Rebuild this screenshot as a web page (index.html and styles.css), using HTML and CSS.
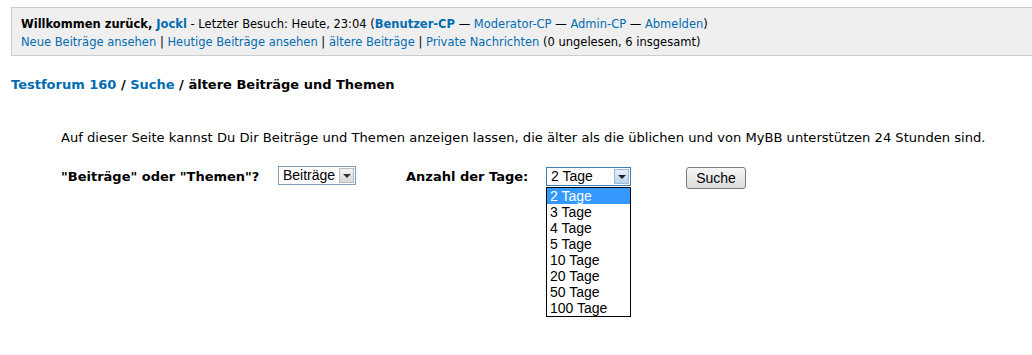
FILE: index.html
```html
<!DOCTYPE html>
<html lang="de">
<head>
    <meta charset="UTF-8">
    <title>ältere Beiträge und Themen</title>
    <link rel="stylesheet" href="styles.css">
</head>
<body>
    <div class="panel">
        <div><strong>Willkommen zurück, <a href="#">Jockl</a></strong> - Letzter Besuch: Heute, 23:04 (<a href="#"><strong>Benutzer-CP</strong></a> &mdash; <a href="#">Moderator-CP</a> &mdash; <a href="#">Admin-CP</a> &mdash; <a href="#">Abmelden</a>)</div>
        <div><a href="#">Neue Beiträge ansehen</a> | <a href="#">Heutige Beiträge ansehen</a> | <a href="#">ältere Beiträge</a> | <a href="#">Private Nachrichten</a> (0 ungelesen, 6 insgesamt)</div>
    </div>

    <div class="navigation">
        <a href="#">Testforum 160</a> / <a href="#">Suche</a> / <span>ältere Beiträge und Themen</span>
    </div>

    <div class="content">
        <p class="intro">Auf dieser Seite kannst Du Dir Beiträge und Themen anzeigen lassen, die älter als die üblichen und von MyBB unterstützen 24 Stunden sind.</p>

        <div class="form-row">
            <span class="label label-type">"Beiträge" oder "Themen"?</span>
            <div class="select select-type">
                <span class="value">Beiträge</span>
                <span class="arrow"></span>
            </div>
            <span class="label label-days">Anzahl der Tage:</span>
            <div class="select-wrap">
                <div class="select select-days">
                    <span class="value">2 Tage</span>
                    <span class="arrow"></span>
                </div>
                <div class="day-list">
                    <div class="day-item current">2 Tage</div>
                    <div class="day-item">3 Tage</div>
                    <div class="day-item">4 Tage</div>
                    <div class="day-item">5 Tage</div>
                    <div class="day-item">10 Tage</div>
                    <div class="day-item">20 Tage</div>
                    <div class="day-item">50 Tage</div>
                    <div class="day-item">100 Tage</div>
                </div>
            </div>
            <span class="button">Suche</span>
        </div>
    </div>
</body>
</html>
```

FILE: styles.css
```css
html, body {
    min-height: 100%;
}

body {
    margin: 0;
    background: #fff;
    color: #000;
    font-family: 'DejaVu Sans', Verdana, sans-serif;
}

a {
    color: #026cb1;
    text-decoration: none;
}

.panel {
    margin: 7px 0 0 11px;
    padding: 7px 0 4px 9px;
    background: #efefef;
    border: 1px solid #ccc;
    border-right: none;
    font-size: 11.5px;
    line-height: 18px;
    color: #000;
}

.navigation {
    margin: 20px 0 0 11px;
    font-size: 13px;
    font-weight: bold;
    line-height: 18px;
}

.content {
    padding-left: 61px;
}

.intro {
    margin: 35px 0 0 0;
    font-size: 13.1px;
    line-height: 18px;
}

.form-row {
    display: flex;
    align-items: flex-start;
    margin-top: 20px;
    font-size: 13px;
}

.label {
    font-weight: bold;
    line-height: 19px;
}

.label-type {
    width: 217px;
}

.label-days {
    width: 140px;
    margin-left: 50px;
}

.select {
    display: flex;
    align-items: center;
    height: 17px;
    border: 1px solid #7f9db9;
    background: #fff;
    font-family: 'Liberation Sans', Arial, sans-serif;
    font-size: 14px;
}

.select .value {
    flex: 1;
    padding-left: 4px;
    line-height: 17px;
}

.select .arrow {
    position: relative;
    width: 15px;
    height: 15px;
    margin-right: 1px;
    border: 1px solid #b7bcc4;
    background: linear-gradient(#f4f4f4, #d8d8d8);
    box-sizing: border-box;
}

.select .arrow::after {
    content: '';
    position: absolute;
    left: 3px;
    top: 5px;
    border-left: 4px solid transparent;
    border-right: 4px solid transparent;
    border-top: 4px solid #333;
}

.select-type {
    width: 76px;
    margin-top: -1px;
}

.select-wrap {
    width: 85px;
}

.select-days {
    border-color: #3c7fb1;
}

.select-days .arrow {
    border-color: #9ab8da;
    background: linear-gradient(#e6f0fb, #b9d4f2);
}

.select-days .arrow::after {
    border-top-color: #222;
}

/* the open dropdown of the day select */
.day-list {
    width: 83px;
    margin-top: 1px;
    border: 1px solid #000;
    background: #fff;
    font-family: 'Liberation Sans', Arial, sans-serif;
    font-size: 14px;
    line-height: 16px;
}

.day-item {
    padding-left: 3px;
    color: #000;
}

.day-item.current {
    background: #3399ff;
    color: #fff;
}

.button {
    display: flex;
    align-items: center;
    justify-content: center;
    width: 58px;
    height: 20px;
    margin-left: 55px;
    border: 1px solid #7a7a7a;
    border-radius: 3px;
    background: linear-gradient(#f6f6f6, #dcdcdc);
    font-family: 'Liberation Sans', Arial, sans-serif;
    font-size: 14px;
    color: #000;
}
```
